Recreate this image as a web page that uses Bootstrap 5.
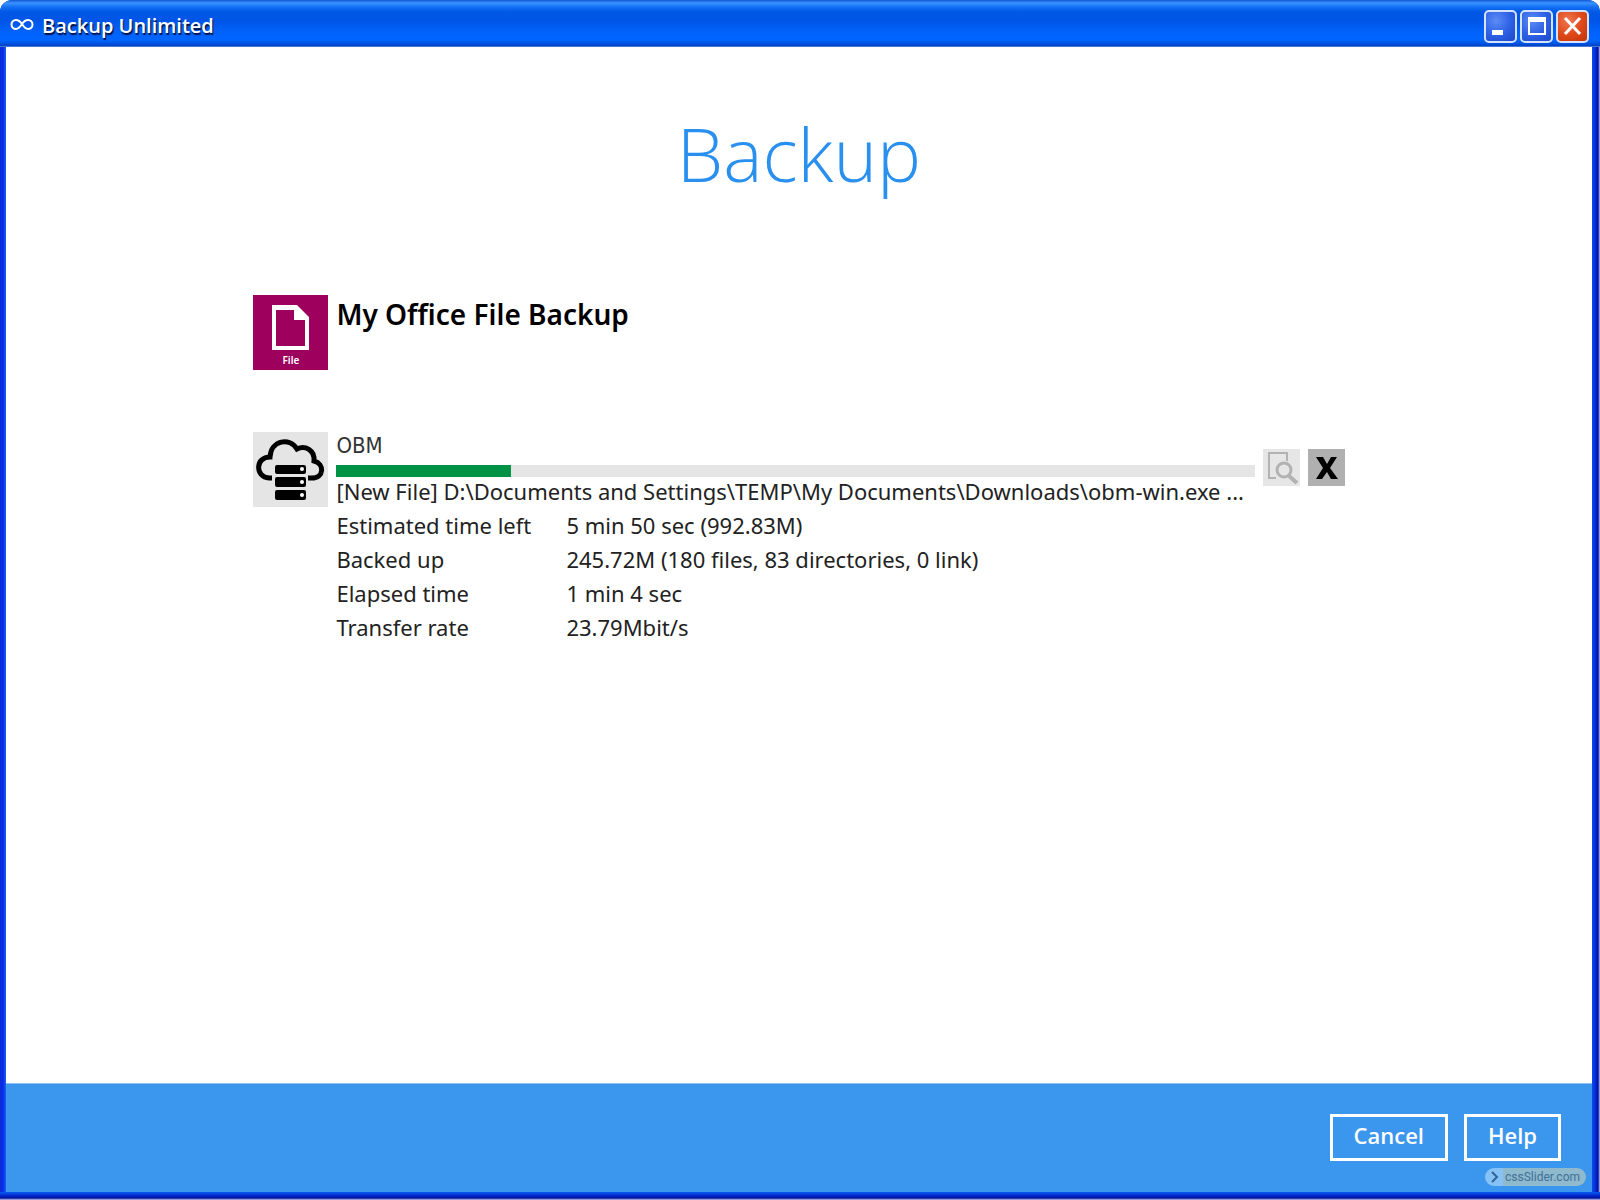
<!DOCTYPE html>
<html lang="en">
<head>
<meta charset="utf-8">
<meta name="viewport" content="width=device-width, initial-scale=1">
<title>Backup Unlimited</title>
<link href="https://cdn.jsdelivr.net/npm/bootstrap@5.3.0/dist/css/bootstrap.min.css" rel="stylesheet">
<style>
  body { font-family: "Noto Sans", "Open Sans", sans-serif; font-size: 22px; line-height: 34px; color: #222; background: #fff; }
  .app-window {
    border-radius: 12px 12px 0 0;
    padding: 0 8px 0 6px;
    background: linear-gradient(90deg, #0a2be0 0, #0a2be0 3px, #1464f5 6px, #0a4ee8 calc(100% - 8px), #0730dc calc(100% - 5px), #0012a0 calc(100% - 2px), #c4c8f4 100%);
  }
  .bottom-edge { height: 8px; margin: 0 -8px 0 -6px; background: linear-gradient(180deg, #0a5cf0 0, #0840e0 2px, #0424c8 4px, #001098 6px, #c4c8f4 8px); }
  .title-bar {
    height: 47px; margin: 0 -8px 0 -6px; padding: 5px 11px 0 10px;
    border-radius: 12px 12px 0 0;
    background: linear-gradient(180deg, #1358d8 0, #3a93ff 3px, #1470f4 7px, #0058e4 12px, #0055e6 20px, #0062fb 32px, #0066ff 40px, #0050dc 44px, #0040c0 46px, #8fb0ea 47px);
  }
  .app-name { font-family: "Open Sans", sans-serif; font-size: 20px; line-height: 30px; font-weight: 600; color: #fff; text-shadow: 1px 2px 1px #001040; }
  .win-btns { gap: 3px; }
  .win-btn {
    width: 33px; height: 33px; padding: 0; border: 2px solid #d5e2fb; border-radius: 5px;
    background: radial-gradient(circle at 35% 30%, #5c8cf4 0, #2f62e6 50%, #1a48cc 100%);
  }
  .win-close { background: radial-gradient(circle at 35% 30%, #f07850 0, #e04a1c 50%, #c03408 100%); }
  .page-title { font-family: "Open Sans", sans-serif; font-size: 74px; line-height: 100px; font-weight: 300; color: #2a90f0; padding: 57px 0 91px; }
  .job-list { width: 68.8%; }
  .tile { width: 75px; height: 75px; flex: none; }
  .tile-file { background: #9e005d; color: #fff; }
  .tile-caption { font-size: 10px; line-height: 12px; font-weight: 600; }
  .tile-cloud { background: #e5e5e5; }
  .job-name { font-size: 28px; line-height: 38px; font-weight: 600; color: #000; }
  .job-set { margin-bottom: 62px; }
  .target-name { font-family: "DejaVu Sans Condensed", "DejaVu Sans", sans-serif; line-height: 27px; padding-bottom: 6px; color: #333; }
  .target-bar { height: 12px; border-radius: 0; background: #e5e5e5; }
  .target-bar .progress-bar { background: #009245; }
  .stats th, .stats td { font-weight: 400; padding: 0; height: 34px; line-height: 34px; }
  .stats th { width: 230px; }
  .current-path { line-height: 28px; padding-bottom: 3px; }
  .target-info { min-width: 0; }
  .tool-btn { width: 37px; height: 37px; padding: 0; border: 0; border-radius: 0; background: #e6e6e6; flex: none; }
  .tool-stop { background: #b0b0b0; }
  .tools { padding-top: 17px; }
  .app-footer { height: 109px; background: #3b96ee; border-top: 1px solid #8fc2f3; padding: 30px 31px 0 0; position: relative; }
  .act-btn { height: 47px; padding: 0 21px 6px; border: 3px solid #fff; border-radius: 0; color: #fff; font-family: "Open Sans", sans-serif; font-size: 22px; line-height: 34px; font-weight: 600; }
  .act-btn:hover { background: #2a80d8; color: #fff; }
  .credit {
    position: absolute; right: 6px; bottom: 6px; height: 18px; padding: 0 6px 0 2px; border-radius: 9px;
    background: linear-gradient(90deg, #86c2f5 18px, #8fb9cc 18px); color: #3f7099; font-family: Roboto, sans-serif; font-size: 12px; line-height: 18px; text-decoration: none;
  }
  .credit:hover { color: #1f5079; }
</style>
</head>
<body>
<div class="app-window min-vh-100 d-flex flex-column">
  <header class="title-bar d-flex align-items-center justify-content-between">
    <div class="d-flex align-items-center gap-2">
      <svg width="24" height="24" viewBox="0 0 24 24" fill="none" stroke="#fff" stroke-width="2" aria-hidden="true"><path d="M12 10C10 7 8 6 6 6a4 4 0 0 0 0 9c3 0 4-2 6-5s4-4 6-4a4 4 0 0 1 0 9c-3 0-4-2-6-5z"/></svg>
      <span class="app-name">Backup Unlimited</span>
    </div>
    <div class="win-btns d-flex flex-shrink-0">
      <button type="button" class="win-btn d-flex" aria-label="Minimize"><svg width="29" height="29" viewBox="0 0 29 29"><path fill="#fff" d="M6 18h11v5H6z"/></svg></button>
      <button type="button" class="win-btn d-flex" aria-label="Maximize"><svg width="29" height="29" viewBox="0 0 29 29"><path fill="#fff" fill-rule="evenodd" d="M6 5h18v18H6zM8 10v11h14V10z"/></svg></button>
      <button type="button" class="win-btn win-close d-flex" aria-label="Close"><svg width="29" height="29" viewBox="0 0 29 29"><path d="M7 6l15 16M22 6L7 22" stroke="#fff" stroke-width="3"/></svg></button>
    </div>
  </header>

  <main class="bg-white flex-grow-1">
    <h1 class="page-title text-center m-0">Backup</h1>
    <div class="job-list mx-auto">
      <section class="job-set d-flex gap-2">
        <div class="tile tile-file d-flex flex-column align-items-center">
          <svg width="75" height="59" viewBox="0 0 75 59" aria-hidden="true"><path fill="#fff" fill-rule="evenodd" d="M19 10h25l12 12v33H19zM23 15v36h29V25H41V15z"/></svg>
          <span class="tile-caption">File</span>
        </div>
        <h2 class="job-name m-0">My Office File Backup</h2>
      </section>

      <section class="d-flex gap-2">
        <div class="tile tile-cloud">
          <svg width="75" height="75" viewBox="0 0 75 75" aria-hidden="true">
            <path d="M19 46h-3C2 45 2 25 17 25 18 8 37 5 44 17c8-4 18 1 17 12 11 3 10 17-2 17h-4" fill="none" stroke="#000" stroke-width="5"/>
            <rect x="22" y="33" width="31" height="9" rx="2"/><rect x="22" y="45" width="31" height="10" rx="2"/><rect x="22" y="58" width="31" height="10" rx="2"/>
            <g fill="#fff"><circle cx="49" cy="37" r="2"/><circle cx="49" cy="50" r="2"/><circle cx="49" cy="63" r="2"/></g>
          </svg>
        </div>
        <div class="target-info flex-grow-1">
          <div class="target-name" id="target">OBM</div>
          <div class="progress target-bar" role="progressbar" aria-labelledby="target" aria-valuenow="19" aria-valuemin="0" aria-valuemax="100">
            <div class="progress-bar" style="width: 19%"></div>
          </div>
          <div class="current-path text-nowrap">[New File] D:\Documents and Settings\TEMP\My Documents\Downloads\obm-win.exe ...</div>
          <table class="stats w-100">
            <tbody>
              <tr><th scope="row">Estimated time left</th><td>5 min 50 sec (992.83M)</td></tr>
              <tr><th scope="row">Backed up</th><td>245.72M (180 files, 83 directories, 0 link)</td></tr>
              <tr><th scope="row">Elapsed time</th><td>1 min 4 sec</td></tr>
              <tr><th scope="row">Transfer rate</th><td>23.79Mbit/s</td></tr>
            </tbody>
          </table>
        </div>
        <div class="tools d-flex gap-2">
          <button type="button" class="tool-btn d-flex" aria-label="View log"><svg width="37" height="37" viewBox="0 0 37 37" fill="none" stroke="#b2b2b2"><path d="M13 29H6V4h18v8" stroke-width="2"/><circle cx="21" cy="21" r="7" stroke-width="3"/><path d="M26 27l8 7" stroke-width="4"/></svg></button>
          <button type="button" class="tool-btn tool-stop d-flex" aria-label="Stop backup"><svg width="37" height="37" viewBox="0 0 37 37"><path d="M8 8h7l4 7 4-7h6l-7 11 8 11h-7l-4-7-5 7H8l7-11z"/></svg></button>
        </div>
      </section>
    </div>
  </main>

  <footer class="app-footer">
    <div class="d-flex justify-content-end gap-3">
      <button type="button" class="btn act-btn">Cancel</button>
      <button type="button" class="btn act-btn">Help</button>
    </div>
    <a class="credit d-flex align-items-center gap-1" href="#"><svg width="14" height="14" viewBox="0 0 14 14" fill="none" stroke="#2f6496" stroke-width="2" aria-hidden="true"><path d="M5 2l5 5-5 5"/></svg>cssSlider.com</a>
  </footer>
  <div class="bottom-edge"></div>
</div>
<script src="https://cdn.jsdelivr.net/npm/bootstrap@5.3.0/dist/js/bootstrap.bundle.min.js"></script>
</body>
</html>
